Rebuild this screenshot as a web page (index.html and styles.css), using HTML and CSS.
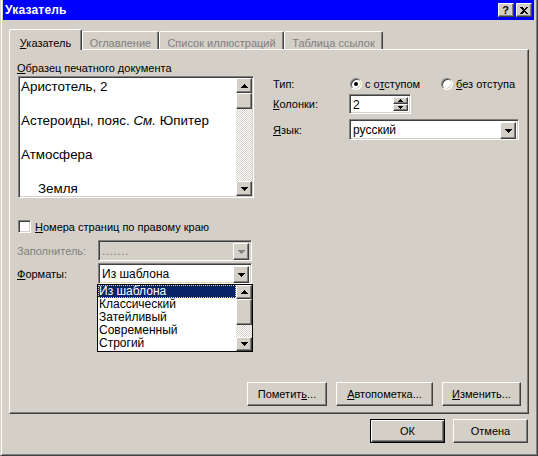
FILE: index.html
```html
<!DOCTYPE html>
<html lang="ru">
<head>
<meta charset="utf-8">
<title>Указатель</title>
<link rel="stylesheet" href="styles.css">
</head>
<body>
<div class="window">
  <div class="titlebar">
    <span class="title">Указатель</span>
    <span class="tbtn help">?</span>
    <span class="tbtn close"><svg width="8" height="7" viewBox="0 0 8 7"><path d="M0 0h2l2 2 2-2h2L5 3.5 8 7H6L4 5 2 7H0l3-3.5z"/></svg></span>
  </div>

  <div class="tabs">
    <div class="tab active"><u>У</u>казатель</div>
    <div class="tab t2">Оглавление</div>
    <div class="tab t3">Список иллюстраций</div>
    <div class="tab t4">Таблица ссылок</div>
  </div>

  <div class="panel">
    <div class="top">
      <div class="leftcol">
        <div class="label"><u>О</u>бразец печатного документа</div>
        <div class="preview sunken">
          <div class="pv-text">
            <div class="entry">Аристотель, 2</div>
            <div class="entry">Астероиды, пояс. <i>См.</i> Юпитер</div>
            <div class="entry">Атмосфера</div>
            <div class="entry sub">Земля</div>
          </div>
          <div class="vscroll pv-scroll">
            <span class="raised sbtn"><svg width="7" height="4" viewBox="0 0 7 4"><path d="M3 0h1v1h1v1h1v1h1v1h-7v-1h1v-1h1v-1h1z"/></svg></span>
            <span class="raised thumb"></span>
            <span class="track"></span>
            <span class="raised sbtn"><svg width="7" height="4" viewBox="0 0 7 4"><path d="M0 0h7v1h-1v1h-1v1h-1v1h-1v-1h-1v-1h-1v-1h-1z"/></svg></span>
          </div>
        </div>
      </div>

      <div class="rightcol">
        <div class="row r1">
          <span class="rlabel">Тип:</span>
          <span class="opt opt1"><span class="radio checked"></span><span>с о<u>т</u>ступом</span></span>
          <span class="opt"><span class="radio"></span><span><u>б</u>ез отступа</span></span>
        </div>
        <div class="row r2">
          <span class="rlabel"><u>К</u>олонки:</span>
          <div class="spin sunken">
            <span class="spin-val">2</span>
            <div class="spin-btns">
              <span class="raised sp"><svg width="5" height="3" viewBox="0 0 5 3"><path d="M2 0h1v1h1v1h1v1h-5v-1h1v-1h1z"/></svg></span>
              <span class="raised sp"><svg width="5" height="3" viewBox="0 0 5 3"><path d="M0 0h5v1h-1v1h-1v1h-1v-1h-1v-1h-1z"/></svg></span>
            </div>
          </div>
        </div>
        <div class="row r3">
          <span class="rlabel"><u>Я</u>зык:</span>
          <div class="combo sunken lang">
            <span class="combo-val">русский</span>
            <span class="raised dd"><svg width="7" height="4" viewBox="0 0 7 4"><path d="M0 0h7v1h-1v1h-1v1h-1v1h-1v-1h-1v-1h-1v-1h-1z"/></svg></span>
          </div>
        </div>
      </div>
    </div>

    <div class="lower">
      <div class="chkrow">
        <span class="check sunken"></span>
        <span><u>Н</u>омера страниц по правому краю</span>
      </div>
      <div class="frow r-fill">
        <span class="flabel disabled">Заполнитель:</span>
        <div class="combo sunken combo-off">
          <span class="combo-val">.......</span>
          <span class="raised dd"><svg width="7" height="4" viewBox="0 0 7 4"><path d="M0 0h7v1h-1v1h-1v1h-1v1h-1v-1h-1v-1h-1v-1h-1z"/></svg></span>
        </div>
      </div>
      <div class="frow r-fmt">
        <span class="flabel"><u>Ф</u>орматы:</span>
        <div class="combo sunken">
          <span class="combo-val">Из шаблона</span>
          <span class="raised dd"><svg width="7" height="4" viewBox="0 0 7 4"><path d="M0 0h7v1h-1v1h-1v1h-1v1h-1v-1h-1v-1h-1v-1h-1z"/></svg></span>
        </div>
        <div class="dropdown">
          <ul class="items">
            <li class="sel">Из шаблона</li>
            <li>Классический</li>
            <li>Затейливый</li>
            <li>Современный</li>
            <li>Строгий</li>
          </ul>
          <div class="vscroll dd-scroll">
            <span class="raised sbtn"><svg width="7" height="4" viewBox="0 0 7 4"><path d="M3 0h1v1h1v1h1v1h1v1h-7v-1h1v-1h1v-1h1z"/></svg></span>
            <span class="raised thumb"></span>
            <span class="track"></span>
            <span class="raised sbtn"><svg width="7" height="4" viewBox="0 0 7 4"><path d="M0 0h7v1h-1v1h-1v1h-1v1h-1v-1h-1v-1h-1v-1h-1z"/></svg></span>
          </div>
        </div>
      </div>
    </div>

    <div class="panel-btns">
      <span class="btn b-mark">Пометит<u>ь</u>...</span>
      <span class="btn b-auto"><u>А</u>втопометка...</span>
      <span class="btn b-edit"><u>И</u>зменить...</span>
    </div>
  </div>

  <div class="dlg-btns">
    <span class="btn default">ОК</span>
    <span class="btn">Отмена</span>
  </div>
</div>
</body>
</html>
```

FILE: styles.css
```css
* { box-sizing: border-box; }

body {
  margin: 0;
  background: #d4d0c8;
  font-family: "Liberation Sans", Arial, sans-serif;
  font-size: 11px;
  color: #000;
}

u { text-decoration: underline; text-underline-offset: 1px; }

svg { display: block; shape-rendering: crispEdges; }
svg path { fill: #000; }

.window {
  width: 538px;
  height: 456px;
  background: #d4d0c8;
  border-left: 1px solid #d4d0c8;
  border-right: 1px solid #404040;
  border-bottom: 1px solid #404040;
  box-shadow: inset 1px 0 #fff, inset -1px -1px #808080;
  padding: 0 3px 3px 2px;
  display: flex;
  flex-direction: column;
}

/* title bar */
.titlebar {
  height: 20px;
  background: #0000ff;
  display: flex;
  align-items: center;
  padding: 0 2px 0 2px;
  flex-shrink: 0;
}
.title {
  color: #fff;
  font-weight: bold;
  font-size: 12px;
  flex: 1;
  letter-spacing: 0.2px;
}
.tbtn {
  width: 16px;
  height: 14px;
  background: #d4d0c8;
  border: 1px solid;
  border-color: #fff #404040 #404040 #fff;
  box-shadow: inset -1px -1px #808080;
  display: flex;
  align-items: center;
  justify-content: center;
}
.help {
  font-weight: bold;
  font-size: 11px;
  line-height: 10px;
  margin-right: 2px;
  padding-right: 1px;
}

/* tabs */
.tabs {
  display: flex;
  align-items: flex-end;
  height: 20px;
  margin-top: 9px;
  padding-left: 6px;
  flex-shrink: 0;
}
.tab {
  height: 18px;
  border-top: 1px solid #fff;
  border-left: 1px solid #fff;
  border-right: 1px solid #404040;
  box-shadow: inset -1px 0 #808080;
  border-radius: 2px 2px 0 0;
  padding-top: 4px;
  line-height: 14px;
  text-align: center;
  color: #808080;
  background: #d4d0c8;
}
.tab.active {
  height: 21px;
  margin-bottom: -1px;
  padding-top: 6px;
  color: #000;
  position: relative;
  z-index: 1;
  width: 73px;
}
.t2 { width: 77px; }
.t3 { width: 125px; }
.t4 { width: 99px; }

/* panel */
.panel {
  height: 365px;
  margin: 0 5px 0 6px;
  border-top: 1px solid #fff;
  border-left: 1px solid #fff;
  border-right: 1px solid #404040;
  border-bottom: 1px solid #404040;
  box-shadow: inset -1px -1px #808080;
  padding: 11px 7px 7px 7px;
  display: flex;
  flex-direction: column;
  flex-shrink: 0;
}

.top { display: flex; }
.leftcol { width: 237px; }
.label { line-height: 14px; height: 14px; }

.sunken {
  border: 1px solid;
  border-color: #808080 #fff #fff #808080;
  box-shadow: inset 1px 1px #404040, inset -1px -1px #d4d0c8;
}
.raised {
  background: #d4d0c8;
  border: 1px solid;
  border-color: #fff #404040 #404040 #fff;
  box-shadow: inset -1px -1px #808080;
}

.preview {
  margin: 1px 0 0 1px;
  width: 236px;
  height: 122px;
  padding: 1px;
  background: #fff;
  display: flex;
}
.pv-text {
  flex: 1;
  overflow: hidden;
  padding-left: 1px;
  font-size: 13.4px;
}
.entry { height: 34px; line-height: 18px; white-space: nowrap; }
.entry.sub { padding-left: 17px; }

.vscroll {
  width: 16px;
  display: flex;
  flex-direction: column;
}
.sbtn {
  height: 15px;
  display: flex;
  align-items: center;
  justify-content: center;
  flex-shrink: 0;
}
.thumb { height: 16px; flex-shrink: 0; }
.track {
  flex: 1;
  background: repeating-conic-gradient(#d4d0c8 0 25%, #fff 0 50%) 0 0 / 2px 2px;
}

/* right column */
.rightcol { margin-left: 19px; padding-top: 16px; }
.row { display: flex; align-items: center; }
.rlabel { width: 76px; flex-shrink: 0; }
.r1 { height: 14px; }
.r2 { height: 20px; margin-top: 3px; }
.r3 { height: 21px; margin-top: 5px; }

.opt { display: flex; align-items: center; gap: 3px; white-space: nowrap; }
.opt1 { width: 92px; padding-left: 1px; }

.radio {
  width: 12px;
  height: 12px;
  border-radius: 50%;
  background: #fff;
  border: 1px solid;
  border-color: #808080 #fff #fff #808080;
  box-shadow: inset 1px 1px #404040, inset -1px -1px #d4d0c8;
  display: flex;
  align-items: center;
  justify-content: center;
  flex-shrink: 0;
}
.radio.checked::after {
  content: "";
  width: 4px;
  height: 4px;
  border-radius: 50%;
  background: #000;
}

.spin {
  width: 62px;
  height: 20px;
  background: #fff;
  display: flex;
  padding: 2px;
}
.spin-val { flex: 1; line-height: 16px; padding-left: 1px; font-size: 12px; }
.spin-btns { width: 15px; display: flex; flex-direction: column; }
.sp {
  height: 8px;
  display: flex;
  align-items: center;
  justify-content: center;
}

.combo {
  height: 21px;
  background: #fff;
  display: flex;
  padding: 2px;
}
.combo-val { flex: 1; line-height: 17px; padding-left: 1px; white-space: nowrap; overflow: hidden; font-size: 12px; }
.dd {
  width: 16px;
  height: 17px;
  display: flex;
  align-items: center;
  justify-content: center;
  flex-shrink: 0;
}
.lang { width: 170px; }

/* lower block */
.lower { margin-top: 22px; }
.chkrow {
  display: flex;
  align-items: center;
  gap: 4px;
  height: 13px;
}
.check {
  width: 13px;
  height: 13px;
  background: #fff;
  margin-left: 1px;
  flex-shrink: 0;
}
.frow { display: flex; align-items: center; position: relative; }
.r-fill { margin-top: 7px; }
.r-fmt { margin-top: 2px; }
.flabel { width: 81px; flex-shrink: 0; }
.frow .combo { width: 154px; }
.disabled { color: #808080; }
.combo-off { background: #d4d0c8; }
.combo-off .combo-val { color: #808080; letter-spacing: 0.5px; }
.combo-off .dd path { fill: #808080; }

.dropdown {
  position: absolute;
  left: 80px;
  top: 21px;
  width: 156px;
  height: 68px;
  border: 1px solid #000;
  background: #fff;
  display: flex;
  z-index: 2;
}
.items {
  list-style: none;
  margin: 0;
  padding: 0;
  flex: 1;
  font-size: 12px;
}
.items li {
  height: 13px;
  line-height: 13px;
  padding-left: 1px;
  white-space: nowrap;
}
.items li.sel {
  background: #0a246a;
  color: #fff;
  outline: 1px dotted #e8e0a0;
  outline-offset: -1px;
}
.dd-scroll .sbtn { height: 14px; }
.dd-scroll .thumb { height: 26px; }

/* buttons */
.btn {
  height: 24px;
  display: flex;
  align-items: center;
  justify-content: center;
  background: #d4d0c8;
  border: 1px solid;
  border-color: #fff #404040 #404040 #fff;
  box-shadow: inset -1px -1px #808080;
  white-space: nowrap;
  width: 75px;
}
.panel-btns {
  margin-top: auto;
  display: flex;
  justify-content: flex-end;
  gap: 9px;
}
.b-mark { width: 80px; }
.b-auto { width: 97px; }
.b-edit { width: 79px; }

.dlg-btns {
  display: flex;
  justify-content: flex-end;
  gap: 8px;
  margin-top: 5px;
  padding-right: 6px;
}
.btn.default {
  border: 1px solid #000;
  box-shadow: inset 1px 1px #fff, inset -1px -1px #404040, inset -2px -2px #808080;
}
```
